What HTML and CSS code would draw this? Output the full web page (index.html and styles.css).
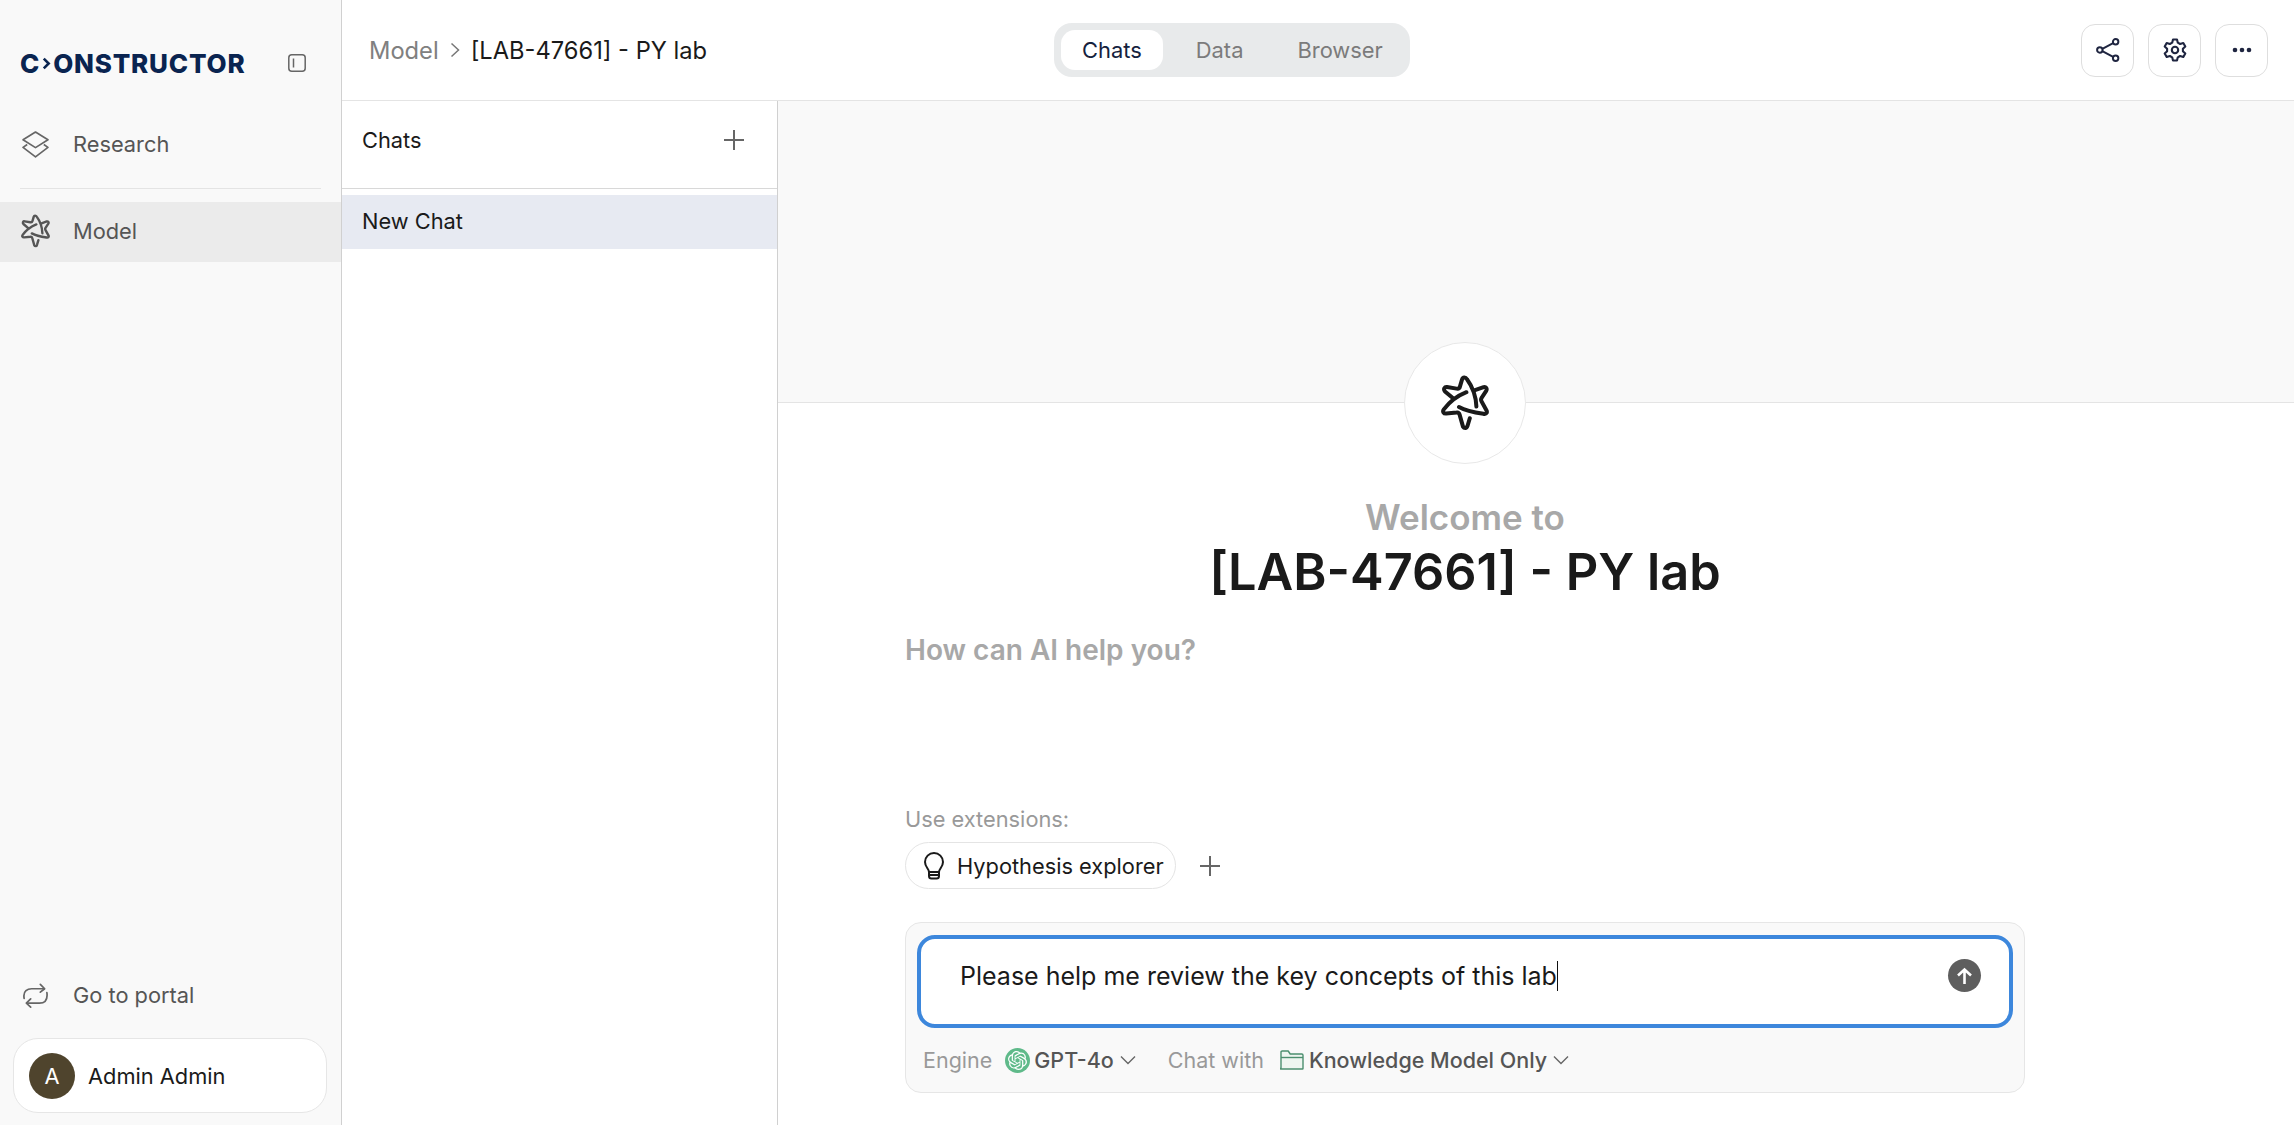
FILE: index.html

```html
<!DOCTYPE html>
<html lang="en">
<head>
    <meta charset="UTF-8">
    <meta name="viewport" content="width=device-width, initial-scale=1.0">
    <title>Constructor</title>
    <link rel="stylesheet" href="styles.css">
</head>
<body>
    <svg class="defs">
        <defs>
            <g id="knot" fill="none" stroke="currentColor" stroke-linecap="round" stroke-linejoin="round">
                <path d="M6.200 11.800 2 8.200C1 7 1.800 5.800 3 6l4.800.8C8.800 7 9.300 6.500 9.500 5.700l1-3.400C10.900 1 12.300 1 13 2.100c2.800 3.800 4.500 8.700 4.700 13.700"/>
                <path d="M17 7.600 21.300 6.100C22.500 5.800 23.200 6.800 22.600 7.900L20.300 11.400C19.900 12 19.900 12.500 20.300 13.200L22.700 17.600C23.400 18.900 22.400 19.700 21.200 19.400 17 18.800 12.500 18 9 16"/>
                <path d="M14.400 21.600 13.200 25.600C12.800 26.800 11.600 26.800 11 25.800L9.300 19.800C9.100 19.100 8.500 18.700 7.800 18.800L2.600 19.300C1.300 19.400 .6 18.300 1.400 17.200 4.200 13.500 8 10.500 12.700 8.600"/>
            </g>
        </defs>
    </svg>

    <div class="app">
        <aside class="sidebar">
            <div class="logo-row">
                <div class="logo">C<svg class="logo-chev" viewBox="0 0 8 12"><path d="M1.500 1.500 6 6l-4.500 4.500" fill="none" stroke="currentColor" stroke-width="2.400"/></svg>ONSTRUCTOR</div>
                <svg class="collapse-icon" viewBox="0 0 18 18" fill="none" stroke="#666" stroke-width="1.500"><rect x=".8" y=".8" width="16.400" height="16.400" rx="3"/><path d="M5.500 4.500v9"/></svg>
            </div>

            <a class="nav-item">
                <svg class="nav-icon" viewBox="0 0 26 26" fill="none" stroke="#666" stroke-width="1.600" stroke-linejoin="round"><path d="M13 1 25 8.500 13 16 1 8.500z"/><path d="M5 13 1 15.800 13 25l12-9.200L21 13"/></svg>
                Research
            </a>
            <div class="nav-line"></div>
            <a class="nav-item active">
                <svg class="nav-icon knot-icon" viewBox="0 0 24 28" stroke-width="2"><use href="#knot"/></svg>
                Model
            </a>

            <div class="sidebar-bottom">
                <a class="nav-item">
                    <svg class="nav-icon" viewBox="0 0 28 28" fill="none" stroke="#666" stroke-width="1.800" stroke-linecap="round" stroke-linejoin="round"><path d="M2.200 17a11 11 0 0 1-.2-3C2 10 5 7 10 7h13"/><path d="M19 2.500 23.500 7 19 10.500"/><path d="M25.800 11a11 11 0 0 1 .2 3c0 5-3 8-8 8H5"/><path d="M9 17.500 4.500 22 9 26"/></svg>
                    Go to portal
                </a>
                <div class="user-card">
                    <span class="avatar">A</span>
                    <span>Admin Admin</span>
                </div>
            </div>
        </aside>

        <div class="main">
            <header class="topbar">
                <div class="crumbs">
                    <span class="crumb-parent">Model</span>
                    <svg class="crumb-sep" viewBox="0 0 10 16" fill="none" stroke="#777" stroke-width="1.500"><path d="m1.500 1.500 7 6.500-7 6.500"/></svg>
                    <span>[LAB-47661] - PY lab</span>
                </div>
                <div class="tabs">
                    <span class="tab selected">Chats</span>
                    <span class="tab">Data</span>
                    <span class="tab">Browser</span>
                </div>
                <div class="actions">
                    <button class="icon-btn"><svg viewBox="0 0 22 22" fill="none" stroke="#1f2540" stroke-width="1.800"><circle cx="3.500" cy="11" r="2.500"/><circle cx="18" cy="3.500" r="2.500"/><circle cx="18" cy="18.500" r="2.500"/><path d="M5.800 10 15.700 4.700M5.800 12l9.900 5.300"/></svg></button>
                    <button class="icon-btn"><svg viewBox="0 0 24 24" fill="none" stroke="#1f2540" stroke-width="2.100" stroke-linejoin="round"><circle cx="12" cy="12" r="3.200"/><path d="M10 1.500h4l.8 3.200 2.300 1.300 3.200-1 2 3.500-2.400 2.300v2.400l2.400 2.300-2 3.500-3.200-1-2.300 1.300-.8 3.200h-4l-.8-3.200L6.900 18l-3.200 1-2-3.500 2.400-2.300v-2.400L1.700 8.500l2-3.500 3.200 1 2.300-1.300z"/></svg></button>
                    <button class="icon-btn"><svg class="dots" viewBox="0 0 20 6" fill="#1f2540"><circle cx="3" cy="3" r="2.300"/><circle cx="10" cy="3" r="2.300"/><circle cx="17" cy="3" r="2.300"/></svg></button>
                </div>
            </header>

            <div class="body">
                <section class="chats">
                    <div class="chats-head">
                        <span>Chats</span>
                        <svg class="plus" viewBox="0 0 22 22" stroke="#666" stroke-width="2"><path d="M11 1v20M1 11h20"/></svg>
                    </div>
                    <div class="chat-row">New Chat</div>
                </section>

                <section class="content">
                    <div class="hero-band"></div>
                    <div class="column">
                        <div class="hero-circle">
                            <svg class="hero-icon" viewBox="0 0 24 28" stroke-width="2"><use href="#knot"/></svg>
                        </div>
                        <div class="welcome">Welcome to</div>
                        <h1 class="lab-title">[LAB-47661] - PY lab</h1>
                        <div class="prompt-title">How can AI help you?</div>

                        <div class="ext-label">Use extensions:</div>
                        <div class="ext-row">
                            <span class="chip">
                                <svg class="bulb" viewBox="0 0 22 28" fill="none" stroke="#1a1a1a" stroke-width="2" stroke-linecap="round" stroke-linejoin="round"><path d="M6 20c0-3-4-5-4-10a9 9 0 0 1 18 0c0 5-4 7-4 10z"/><path d="M6 20v4c0 1.500 1 2.500 2.500 2.500h5c1.500 0 2.500-1 2.500-2.500v-4M6 23h10"/></svg>
                                Hypothesis explorer
                            </span>
                            <svg class="plus" viewBox="0 0 22 22" stroke="#666" stroke-width="2"><path d="M11 1v20M1 11h20"/></svg>
                        </div>

                        <div class="composer">
                            <div class="input-box">
                                <span class="input-text">Please help me review the key concepts of this lab</span><span class="caret"></span>
                                <span class="send"><svg viewBox="0 0 16 18" fill="none" stroke="#fff" stroke-width="2.600"><path d="M8 17V2.500M1.500 8.500 8 2.500l6.500 6"/></svg></span>
                            </div>
                            <div class="composer-opts">
                                <span class="opt-label">Engine</span>
                                <span class="gpt-icon">
                                    <svg viewBox="0 0 24 24" fill="#fff"><path d="M22.2819 9.8211a5.9847 5.9847 0 0 0-.5157-4.9108 6.0462 6.0462 0 0 0-6.5098-2.9A6.0651 6.0651 0 0 0 4.9807 4.1818a5.9847 5.9847 0 0 0-3.9977 2.9 6.0462 6.0462 0 0 0 .7427 7.0966 5.98 5.98 0 0 0 .511 4.9107 6.051 6.051 0 0 0 6.5146 2.9001A5.9847 5.9847 0 0 0 13.2599 24a6.0557 6.0557 0 0 0 5.7718-4.2058 5.9894 5.9894 0 0 0 3.9977-2.9001 6.0557 6.0557 0 0 0-.7475-7.0729zm-9.022 12.6081a4.4755 4.4755 0 0 1-2.8764-1.0408l.1419-.0804 4.7783-2.7582a.7948.7948 0 0 0 .3927-.6813v-6.7369l2.02 1.1686a.071.071 0 0 1 .038.052v5.5826a4.504 4.504 0 0 1-4.4945 4.4944zm-9.6607-4.1254a4.4708 4.4708 0 0 1-.5346-3.0137l.142.0852 4.783 2.7582a.7712.7712 0 0 0 .7806 0l5.8428-3.3685v2.3324a.0804.0804 0 0 1-.0332.0615L9.74 19.9502a4.4992 4.4992 0 0 1-6.1408-1.6464zM2.3408 7.8956a4.485 4.485 0 0 1 2.3655-1.9728V11.6a.7664.7664 0 0 0 .3879.6765l5.8144 3.3543-2.0201 1.1685a.0757.0757 0 0 1-.071 0l-4.8303-2.7865A4.504 4.504 0 0 1 2.3408 7.872zm16.5963 3.8558L13.1038 8.364 15.1192 7.2a.0757.0757 0 0 1 .071 0l4.8303 2.7913a4.4944 4.4944 0 0 1-.6765 8.1042v-5.6772a.79.79 0 0 0-.407-.667zm2.0107-3.0231l-.142-.0852-4.7735-2.7818a.7759.7759 0 0 0-.7854 0L9.409 9.2297V6.8974a.0662.0662 0 0 1 .0284-.0615l4.8303-2.7866a4.4992 4.4992 0 0 1 6.6802 4.66zM8.3065 12.863l-2.02-1.1638a.0804.0804 0 0 1-.038-.0567V6.0742a4.4992 4.4992 0 0 1 7.3757-3.4537l-.142.0805L8.704 5.459a.7948.7948 0 0 0-.3927.6813zm1.0976-2.3654l2.602-1.4998 2.6069 1.4998v2.9994l-2.5974 1.4997-2.6067-1.4997Z"/></svg>
                                </span>
                                <span class="opt-value">GPT-4o</span>
                                <svg class="opt-chev" viewBox="0 0 16 10" fill="none" stroke="#666" stroke-width="1.400"><path d="m1 1.500 7 7 7-7"/></svg>
                                <span class="opt-label chat-with">Chat with</span>
                                <svg class="folder" viewBox="0 0 24 20" fill="#eef5f0" stroke="#4c8f6f" stroke-width="1.400" stroke-linejoin="round"><path d="M1 18.500V2.200C1 1.500 1.500 1 2.200 1h6l2 3h11.600c.7 0 1.200.5 1.200 1.200v13.300c0 .3-.2.500-.5.500h-22c-.3 0-.5-.2-.5-.5z"/><path d="M1 7.500h22"/></svg>
                                <span class="opt-value">Knowledge Model Only</span>
                                <svg class="opt-chev" viewBox="0 0 16 10" fill="none" stroke="#666" stroke-width="1.400"><path d="m1 1.500 7 7 7-7"/></svg>
                            </div>
                        </div>
                    </div>
                </section>
            </div>
        </div>
    </div>
</body>
</html>
```

FILE: styles.css

```css
* {
    box-sizing: border-box;
}
body {
    margin: 0;
    font-family: Inter, "Liberation Sans", sans-serif;
    font-size: 21.800px;
    color: #1a1a1a;
    background: #fff;
}
.defs {
    position: absolute;
    width: 0;
    height: 0;
}
.app {
    display: flex;
    height: 100vh;
    overflow: hidden;
}

/* sidebar */
.sidebar {
    width: 342px;
    flex: none;
    display: flex;
    flex-direction: column;
    background: #f9f9f9;
    border-right: 1px solid #d0d0d0;
}
.logo-row {
    height: 114px;
    padding: 12px 35px 0 20px;
    display: flex;
    align-items: center;
    justify-content: space-between;
    flex: none;
}
.logo {
    display: flex;
    align-items: center;
    font-size: 26px;
    font-weight: 800;
    color: #0a2450;
    letter-spacing: .8px;
}
.logo-chev {
    width: 9px;
    height: 13px;
    margin: 0 2px 0 2px;
}
.collapse-icon {
    width: 18px;
    height: 18px;
}
.nav-item {
    height: 60px;
    display: flex;
    align-items: center;
    gap: 24px;
    padding-left: 22px;
    color: #555;
}
.nav-item.active {
    padding-bottom: 2px;
    background: #ebebeb;
}
.nav-icon {
    width: 27px;
    height: 27px;
    flex: none;
}
.knot-icon {
    color: #555;
    width: 29px;
    height: 34px;
    margin: 0 -1px;
}
.nav-line {
    height: 1px;
    margin: 14px 20px 13px;
    background: #e4e4e4;
}
.sidebar-bottom {
    margin-top: auto;
    padding-bottom: 12px;
}
.user-card {
    height: 75px;
    margin: 13px 14px 0 13px;
    padding-left: 15px;
    display: flex;
    align-items: center;
    gap: 13px;
    background: #fff;
    border: 1px solid #e6e6e6;
    border-radius: 25px;
    color: #1a1a1a;
}
.avatar {
    width: 46px;
    height: 46px;
    border-radius: 50%;
    background: #4f442d;
    color: #fff;
    display: flex;
    align-items: center;
    justify-content: center;
}

/* top bar */
.main {
    flex: 1;
    min-width: 0;
    display: flex;
    flex-direction: column;
}
.topbar {
    height: 101px;
    flex: none;
    display: flex;
    align-items: center;
    padding: 0 26px 0 27px;
    border-bottom: 1px solid #e4e4e4;
}
.crumbs {
    display: flex;
    align-items: center;
    gap: 11px;
    font-size: 23.700px;
    margin-right: 2px;
}
.crumb-parent {
    color: #808080;
}
.crumb-sep {
    width: 10px;
    height: 16px;
}
.tabs {
    margin-left: 345px;
    height: 54px;
    padding: 7px 0 7px 7px;
    display: flex;
    background: #e8eaeb;
    border-radius: 18px;
}
.tab {
    display: flex;
    align-items: center;
    padding: 0 27px;
    color: #7b7b7b;
    font-size: 21.900px;
}
.tab.selected {
    padding: 0 21px;
    margin-right: 6px;
    background: #fff;
    color: #14213d;
    border-radius: 14px;
}
.actions {
    margin-left: auto;
    display: flex;
    gap: 14px;
}
.icon-btn {
    width: 53px;
    height: 53px;
    padding: 0;
    display: flex;
    align-items: center;
    justify-content: center;
    background: #fff;
    border: 1px solid #dedede;
    border-radius: 14px;
}
.icon-btn svg {
    width: 24px;
    height: 24px;
}
.icon-btn .dots {
    width: 20px;
    height: 6px;
}

/* chat list */
.body {
    flex: 1;
    min-height: 0;
    display: flex;
}
.chats {
    width: 436px;
    flex: none;
    border-right: 1px solid #d0d0d0;
}
.chats-head {
    height: 88px;
    padding: 0 32px 10px 20px;
    display: flex;
    align-items: center;
    justify-content: space-between;
    border-bottom: 1px solid #d8d8d8;
}
.plus {
    width: 22px;
    height: 22px;
}
.chat-row {
    height: 54px;
    margin-top: 6px;
    padding: 0 0 2px 20px;
    display: flex;
    align-items: center;
    background: #e7eaf2;
}

/* center column */
.content {
    flex: 1;
    min-width: 0;
    position: relative;
}
.hero-band {
    height: 302px;
    background: #f9f9f9;
    border-bottom: 1px solid #e4e4e4;
}
.column {
    width: 1120px;
    margin: -61px 0 0 127px;
    position: relative;
    display: flex;
    flex-direction: column;
}
.hero-circle {
    width: 122px;
    height: 122px;
    margin: 0 auto;
    display: flex;
    align-items: center;
    justify-content: center;
    background: #fff;
    border: 1px solid #e8e8e8;
    border-radius: 50%;
}
.hero-icon {
    width: 48px;
    height: 56px;
    color: #1a1a1a;
}
.welcome {
    margin-top: 32px;
    text-align: center;
    font-size: 35px;
    font-weight: 600;
    color: #a8a8a8;
}
.lab-title {
    margin: 3px 0 0;
    text-align: center;
    font-size: 50.500px;
    font-weight: 600;
}
.prompt-title {
    margin-top: 31px;
    height: 173px;
    font-size: 28px;
    font-weight: 600;
    color: #a8a8a8;
}
.ext-label {
    color: #999;
}
.ext-row {
    margin-top: 10px;
    display: flex;
    align-items: center;
    gap: 23px;
}
.chip {
    height: 47px;
    padding: 0 11px 0 17px;
    display: flex;
    align-items: center;
    gap: 12px;
    background: #fff;
    border: 1px solid #e4e4e4;
    border-radius: 24px;
}
.bulb {
    width: 22px;
    height: 28px;
}

/* composer */
.composer {
    margin-top: 33px;
    height: 171px;
    padding: 12px 11px 0 11px;
    background: #f9f9f9;
    border: 1px solid #e6e6e6;
    border-radius: 16px;
}
.input-box {
    height: 93px;
    padding: 0 28px 12px 39px;
    display: flex;
    align-items: center;
    background: #fff;
    border: 4px solid #3d87dc;
    border-radius: 18px;
    font-size: 25px;
}
.caret {
    width: 1.500px;
    height: 30px;
    background: #111;
}
.send {
    margin-left: auto;
    width: 33px;
    height: 33px;
    display: flex;
    align-items: center;
    justify-content: center;
    background: #5e5e5e;
    border-radius: 50%;
}
.send svg {
    width: 17px;
    height: 18px;
}
.composer-opts {
    height: 64px;
    padding-left: 6px;
    display: flex;
    align-items: center;
    font-size: 21.500px;
    color: #555;
}
.opt-label {
    color: #999;
    margin-right: 13px;
}
.chat-with {
    margin-left: 32px;
    margin-right: 16px;
}
.gpt-icon {
    width: 25px;
    height: 25px;
    margin-right: 4px;
    background: #5fba8a;
    border-radius: 50%;
    display: flex;
    align-items: center;
    justify-content: center;
}
.gpt-icon svg {
    width: 19px;
    height: 19px;
}
.folder {
    width: 24px;
    height: 20px;
    margin-right: 5px;
}
.opt-value {
    font-weight: 500;
}
.opt-chev {
    width: 16px;
    height: 10px;
    margin-left: 6px;
}
```
